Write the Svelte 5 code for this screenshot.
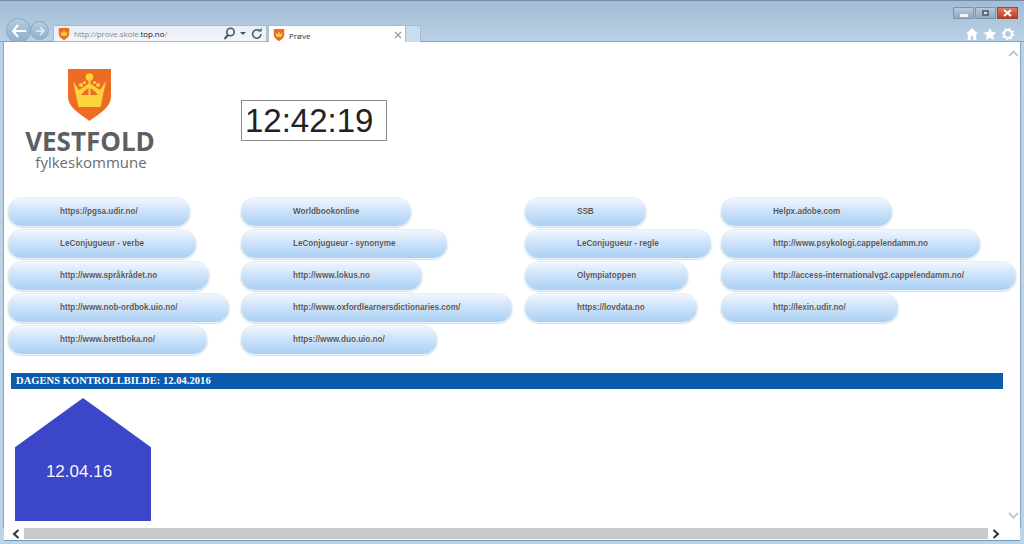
<script>
  const columns = [
    ["https://pgsa.udir.no/", "LeConjugueur - verbe", "http://www.språkrådet.no", "http://www.nob-ordbok.uio.no/", "http://www.brettboka.no/"],
    ["Worldbookonline", "LeConjugueur - synonyme", "http://www.lokus.no", "http://www.oxfordlearnersdictionaries.com/", "https://www.duo.uio.no/"],
    ["SSB", "LeConjugueur - regle", "Olympiatoppen", "https://lovdata.no"],
    ["Helpx.adobe.com", "http://www.psykologi.cappelendamm.no", "http://access-internationalvg2.cappelendamm.no/", "http://lexin.udir.no/"],
  ];
</script>

{#snippet shield(size)}
  <svg class="favicon" width={size} height={size} viewBox="0 0 16 16">
    <path d="M2 1h12v7c0 3-3 5-6 7-3-2-6-4-6-7z" fill="#ec6b25" />
    <path d="M4 5l2 2 2-3 2 3 2-2-1 5H5z" fill="#fcd33b" />
  </svg>
{/snippet}

<div class="window">
  <header class="chrome">
    <div class="caption">
      <div class="winbtn"><span class="dash"></span></div>
      <div class="winbtn"><span class="square"></span></div>
      <div class="winbtn close">
        <svg width="9" height="8" viewBox="0 0 9 8"><path d="M1 1l7 6M8 1L1 7" stroke="#fff" stroke-width="2" /></svg>
      </div>
    </div>
    <div class="toolbar">
      <div class="nav">
        <div class="round back">
          <svg width="16" height="14" viewBox="0 0 16 14"><path d="M7 1L2 7l5 6M2 7h13" fill="none" stroke="#fff" stroke-width="2" /></svg>
        </div>
        <div class="round forward">
          <svg width="10" height="10" viewBox="0 0 10 10"><path d="M5 1l4 4-4 4M9 5H1" fill="none" stroke="#e4edf5" stroke-width="1.5" /></svg>
        </div>
      </div>
      <div class="address">
        {@render shield(14)}
        <span class="url">http://prove.skole.<b>top.no</b>/</span>
        <svg class="search" width="13" height="13" viewBox="0 0 13 13"><circle cx="7.5" cy="5" r="3.7" fill="none" stroke="#4a5560" stroke-width="1.6" /><path d="M5 8l-3.5 4" stroke="#4a5560" stroke-width="2" /></svg>
        <span class="caret"></span>
        <svg class="refresh" width="12" height="12" viewBox="0 0 12 12"><path d="M10 6a4.2 4.2 0 1 1-1.4-3.1" fill="none" stroke="#4a5560" stroke-width="1.5" /><path d="M7 3.6h3.6V0z" fill="#4a5560" /></svg>
      </div>
      <div class="tab">
        {@render shield(14)}
        <span class="tab-title">Prøve</span>
        <svg class="tab-close" width="8" height="8" viewBox="0 0 8 8"><path d="M1 1l6 6M7 1L1 7" stroke="#9a9fa5" stroke-width="1.4" /></svg>
      </div>
      <div class="newtab"></div>
      <div class="tools">
        <svg width="14" height="14" viewBox="0 0 15 15"><path d="M7.5 1L1 7.5h2V14h3.2V9.500h2.600V14H12V7.500h2z" fill="#fff" /></svg>
        <svg width="14" height="14" viewBox="0 0 15 15"><path d="M7.500 .8l2 4.600 5 .4-3.800 3.300 1.200 4.900-4.400-2.600-4.400 2.600 1.200-4.900L.5 5.800l5-.4z" fill="#fff" /></svg>
        <svg width="14" height="14" viewBox="0 0 15 15"><circle cx="7.500" cy="7.500" r="4.300" fill="none" stroke="#fff" stroke-width="2.200" /><circle cx="7.500" cy="7.500" r="6" fill="none" stroke="#fff" stroke-width="1.600" stroke-dasharray="2 2.710" /></svg>
      </div>
    </div>
  </header>

  <div class="body">
    <main class="page">
      <div class="top">
        <div class="logo">
          <svg class="crest" width="43" height="52" viewBox="0 0 43 52">
            <path d="M0 0h43v28c0 10-12 17-21.500 24C12 45 0 38 0 28z" fill="#ec6b25" />
            <path d="M5 12l6 9 10.500-7 10.500 7 6-9-5.500 26H10.500z" fill="#fcd33b" />
            <path d="M13 26q4-5 7.500-7v7zM30 26q-4-5-7.500-7v7z" fill="#ec6b25" />
            <circle cx="21.500" cy="8" r="3.800" fill="#fcd33b" />
            <path d="M20.500 8h2v8h-2z" fill="#fcd33b" />
            <circle cx="13" cy="16" r="2" fill="#fcd33b" />
            <circle cx="30" cy="16" r="2" fill="#fcd33b" />
            <circle cx="16.500" cy="13.500" r="1.600" fill="#fcd33b" />
            <circle cx="26.500" cy="13.500" r="1.600" fill="#fcd33b" />
          </svg>
          <div class="county">VESTFOLD</div>
          <div class="sub">fylkeskommune</div>
        </div>
        <div class="clock">12:42:19</div>
      </div>

      <div class="links">
        {#each columns as col}
          <div class="col">
            {#each col as link}
              <a class="pill" href="#top">{link}</a>
            {/each}
          </div>
        {/each}
      </div>

      <h2 class="banner">DAGENS KONTROLLBILDE: 12.04.2016</h2>
      <div class="house"><span>12.04.16</span></div>
    </main>
    <div class="vscroll">
      <svg width="11" height="7" viewBox="0 0 11 7"><path d="M1 6l4.500-4.500L10 6" fill="none" stroke="#c4c8cc" stroke-width="2" /></svg>
      <svg width="11" height="7" viewBox="0 0 11 7"><path d="M1 1l4.500 4.500L10 1" fill="none" stroke="#c4c8cc" stroke-width="2" /></svg>
    </div>
  </div>

  <div class="hscroll">
    <svg width="8" height="10" viewBox="0 0 8 10"><path d="M6.500 1L2 5l4.500 4" fill="none" stroke="#333" stroke-width="2" /></svg>
    <div class="thumb"></div>
    <svg width="8" height="10" viewBox="0 0 8 10"><path d="M1.500 1L6 5 1.500 9" fill="none" stroke="#333" stroke-width="2" /></svg>
  </div>
</div>

<style>
  :global(body) {
    margin: 0;
  }
  .window {
    width: 1024px;
    height: 544px;
    display: flex;
    flex-direction: column;
    overflow: hidden;
    box-sizing: border-box;
    border-top: 1px solid #6f8da8;
    background: linear-gradient(180deg, #a3bdd4 0, #b9d1e6 40px, #bad3e8 100%);
    font-family: "Liberation Sans", Arial, sans-serif;
  }
  .chrome {
    height: 41px;
    flex: none;
    display: flex;
    flex-direction: column;
    box-sizing: border-box;
    border-bottom: 1px solid #8ba3b8;
  }
  .caption {
    height: 17px;
    flex: none;
    display: flex;
    justify-content: flex-end;
    gap: 1px;
    padding: 6px 6px 0 0;
    box-sizing: border-box;
  }
  .winbtn {
    width: 21px;
    height: 12px;
    box-sizing: border-box;
    border: 1px solid #7d95aa;
    background: linear-gradient(180deg, #b9cbdb, #8fa9c0);
    display: flex;
    align-items: center;
    justify-content: center;
  }
  .winbtn.close {
    border-color: #99493a;
    background: linear-gradient(180deg, #dc7a63, #bd3d25);
  }
  .dash {
    width: 8px;
    height: 3px;
    margin-top: 4px;
    background: #f0f4f8;
  }
  .square {
    width: 7px;
    height: 6px;
    box-sizing: border-box;
    border: 2px solid #5d6f80;
    background: #dbe5ee;
  }
  .toolbar {
    flex: 1;
    display: flex;
    align-items: flex-end;
    padding-left: 6px;
  }
  .nav {
    display: flex;
    align-items: center;
    height: 25px;
    margin-right: 4px;
  }
  .round {
    display: flex;
    align-items: center;
    justify-content: center;
    border-radius: 50%;
    box-sizing: border-box;
    border: 1px solid #8aa8c2;
    background: linear-gradient(180deg, #b4cbe0, #8fb0cc);
  }
  .back {
    width: 25px;
    height: 25px;
  }
  .forward {
    width: 19px;
    height: 19px;
    margin-left: -1px;
  }
  .address {
    width: 214px;
    height: 17px;
    box-sizing: border-box;
    display: flex;
    align-items: center;
    background: linear-gradient(180deg, #e5eef6, #f3f6f9);
    border: 1px solid #a9bccd;
    padding: 0 3px;
    margin-bottom: 1px;
  }
  .favicon {
    flex: none;
  }
  .url {
    font-family: "Open Sans", sans-serif;
    font-size: 8px;
    letter-spacing: -0.1px;
    color: #7f8a93;
    margin-left: 2px;
    padding-left: 1px;
    flex: 1;
    white-space: nowrap;
  }
  .url b {
    font-weight: 400;
    color: #1c2126;
  }
  .caret {
    width: 0;
    height: 0;
    border-left: 3px solid transparent;
    border-right: 3px solid transparent;
    border-top: 3px solid #4a5560;
    margin: 0 5px 0 4px;
  }
  .tab {
    width: 138px;
    height: 19px;
    box-sizing: border-box;
    display: flex;
    align-items: center;
    background: #fff;
    border: 1px solid #a9bccd;
    border-bottom: none;
    padding: 0 3px;
    margin-left: 1px;
    margin-bottom: -1px;
  }
  .tab-title {
    font-family: "Open Sans", sans-serif;
    font-size: 8px;
    color: #333;
    margin-left: 2px;
    padding-left: 1px;
    flex: 1;
  }
  .newtab {
    width: 15px;
    height: 18px;
    box-sizing: border-box;
    background: #c9ddee;
    border: 1px solid #a9bccd;
    border-left: none;
  }
  .tools {
    margin-left: auto;
    display: flex;
    gap: 4px;
    padding: 0 9px 2px 0;
    align-self: flex-end;
  }
  .body {
    flex: 1;
    min-height: 0;
    display: flex;
    margin: 0 3px;
    background: #fff;
    border-left: 1px solid #8ba3b8;
    border-right: 1px solid #8ba3b8;
  }
  .page {
    flex: 1;
    min-width: 0;
    padding: 0 0 0 3px;
  }
  .top {
    display: flex;
    height: 155px;
  }
  .logo {
    width: 234px;
    padding: 27px 0 0 18px;
    box-sizing: border-box;
    text-align: center;
    flex: none;
  }
  .logo > * {
    width: 130px;
  }
  .crest {
    display: block;
    width: 43px;
    margin: 0 auto 0 43px;
  }
  .county {
    font-family: "Open Sans", sans-serif;
    font-weight: 700;
    font-size: 26px;
    line-height: 26px;
    margin-top: 7px;
    color: #5d5f61;
    white-space: nowrap;
  }
  .sub {
    font-family: "Open Sans", sans-serif;
    font-size: 15px;
    line-height: 16px;
    padding-left: 1px;
    color: #6b6d6f;
  }
  .clock {
    margin-top: 58px;
    width: 146px;
    height: 41px;
    box-sizing: border-box;
    border: 1px solid #8a8a8a;
    font-size: 33px;
    line-height: 39px;
    padding-left: 3px;
    color: #222;
  }
  .links {
    display: grid;
    grid-template-columns: 233px 284px 196px 1fr;
    height: 176px;
  }
  .col {
    display: flex;
    flex-direction: column;
    align-items: flex-start;
    gap: 2px;
  }
  .pill {
    height: 30px;
    box-sizing: border-box;
    display: block;
    padding: 0 52px;
    line-height: 28px;
    white-space: nowrap;
    font-size: 8.15px;
    font-weight: 700;
    color: #555;
    text-decoration: none;
    text-shadow: 0 0 1px #fff;
    border-radius: 15px;
    border: 1px solid #e7eef6;
    background: linear-gradient(180deg, #f2f7fd 0, #d5e7fa 35%, #a9d0f5 100%);
    box-shadow: 0 1px 1px #d5dde6;
  }
  .banner {
    margin: 0 0 0 4px;
    width: 992px;
    height: 16px;
    box-sizing: border-box;
    padding-left: 5px;
    background: #0b5cad;
    color: #fff;
    font-family: "Liberation Serif", serif;
    font-size: 10.5px;
    line-height: 16px;
    letter-spacing: 0.05px;
    font-weight: 700;
  }
  .house {
    margin: 9px 0 0 8px;
    width: 136px;
    height: 123px;
    background: #3c46c8;
    clip-path: polygon(50% 0, 100% 40%, 100% 100%, 0 100%, 0 40%);
    color: #f4f5fc;
    font-size: 17px;
    display: flex;
    justify-content: center;
    padding: 64px 8px 0 0;
    box-sizing: border-box;
  }
  .vscroll {
    width: 13px;
    flex: none;
    display: flex;
    flex-direction: column;
    justify-content: space-between;
    align-items: center;
    padding: 8px 0 9px;
    box-sizing: border-box;
  }
  .hscroll {
    height: 16px;
    flex: none;
    display: flex;
    align-items: center;
    margin: 0 4px;
    padding: 0 20px 5px 8px;
    box-sizing: border-box;
    gap: 4px;
    background: linear-gradient(180deg, #fff 12px, #6f9db8 12px, #6f9db8 13px, #bad3e8 13px);
  }
  .thumb {
    flex: 1;
    height: 11px;
    background: #c9c9c9;
  }
</style>
